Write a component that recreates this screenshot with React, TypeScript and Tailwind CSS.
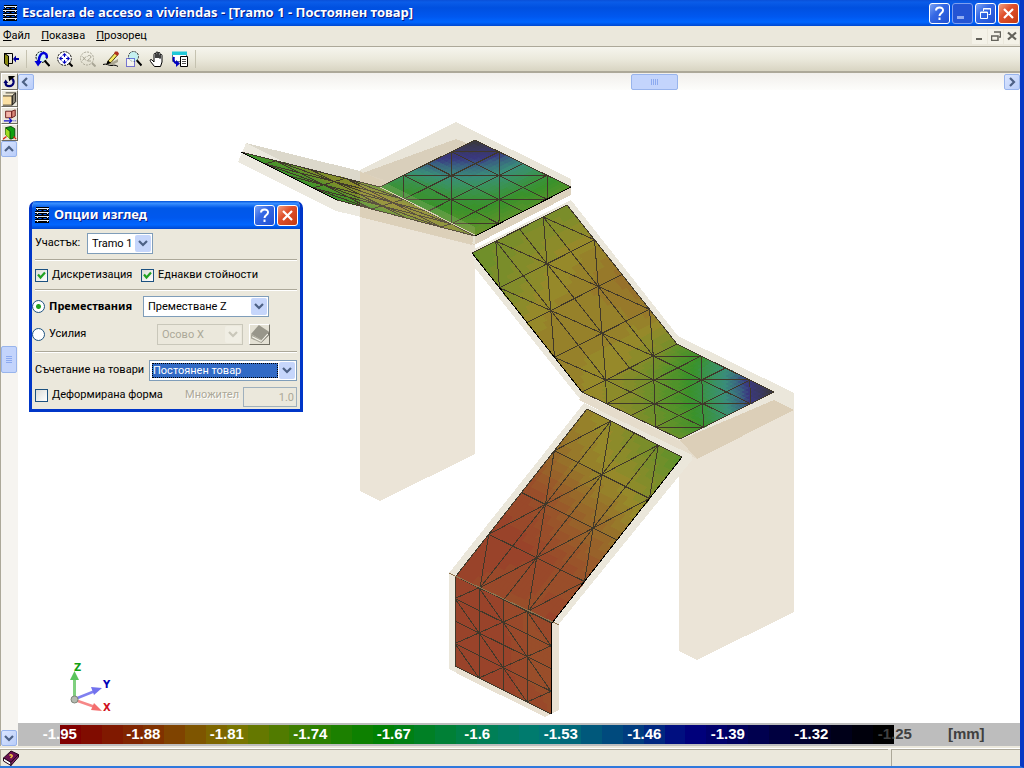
import type { ReactNode } from "react";

type Pt = [number, number];

// colour scale from -1.95 mm (t = 0) to -1.25 mm (t = 1)
const scale: [number, number, number, number][] = [
  [0, 128, 0, 0],
  [0.1, 128, 48, 0],
  [0.2, 124, 116, 0],
  [0.3, 48, 128, 0],
  [0.38, 0, 128, 0],
  [0.5, 0, 128, 80],
  [0.58, 0, 122, 118],
  [0.7, 0, 56, 128],
  [0.76, 0, 0, 128],
  [0.9, 0, 0, 48],
  [1, 0, 0, 0],
];

function scaleRgb(t: number) {
  const i = Math.max(1, scale.findIndex((s) => s[0] >= t));
  const a = scale[i - 1];
  const b = scale[i];
  const k = (t - a[0]) / (b[0] - a[0]);
  return [1, 2, 3].map((c) => a[c] + (b[c] - a[c]) * k);
}

function legendColor(t: number) {
  const [r, g, b] = scaleRgb(t).map(Math.round);
  return `rgb(${r},${g},${b})`;
}

function surfaceColor(t: number) {
  const [r, g, b] = scaleRgb(Math.round(t * 60) / 60);
  return `rgb(${Math.round(r * 0.74 + 58)},${Math.round(g * 0.7 + 56)},${Math.round(b * 0.68 + 42)})`;
}

// corners: origin, end of u, end of u+v, end of v; values are rows along v
type Surface = { corners: [Pt, Pt, Pt, Pt]; values: number[][]; edge: [number, number][] };

const surfaces: Surface[] = [
  {
    corners: [[380, 187], [475, 140], [571, 187], [475, 236]],
    values: [
      [0.38, 0.5, 0.7, 0.82, 0.96],
      [0.38, 0.43, 0.6, 0.72, 0.8],
      [0.37, 0.41, 0.48, 0.56, 0.58],
      [0.33, 0.37, 0.4, 0.42, 0.42],
      [0.27, 0.3, 0.32, 0.32, 0.32],
    ],
    edge: [[2, 3]],
  },
  {
    corners: [[241, 152], [337, 200], [475, 236], [380, 187]],
    values: [
      [0.38, 0.38, 0.38, 0.38, 0.38],
      [0.33, 0.32, 0.32, 0.33, 0.36],
      [0.25, 0.24, 0.23, 0.24, 0.28],
      [0.24, 0.21, 0.2, 0.21, 0.23],
      [0.3, 0.26, 0.23, 0.23, 0.26],
    ],
    edge: [[0, 1]],
  },
  {
    corners: [[472, 253], [567, 205], [677, 344], [582, 392]],
    values: [
      [0.28, 0.26, 0.25, 0.25, 0.26],
      [0.25, 0.23, 0.21, 0.2, 0.2],
      [0.2, 0.19, 0.185, 0.17, 0.15],
      [0.18, 0.18, 0.18, 0.18, 0.16],
      [0.19, 0.21, 0.21, 0.23, 0.27],
    ],
    edge: [[3, 0]],
  },
  {
    corners: [[582, 392], [677, 344], [774, 392], [680, 439]],
    values: [
      [0.19, 0.21, 0.22, 0.24, 0.28],
      [0.21, 0.23, 0.27, 0.33, 0.38],
      [0.23, 0.28, 0.34, 0.42, 0.56],
      [0.26, 0.32, 0.42, 0.58, 0.78],
      [0.28, 0.38, 0.54, 0.76, 0.94],
    ],
    edge: [],
  },
  {
    corners: [[587, 409], [682, 457], [552, 623], [456, 576]],
    values: [
      [0.19, 0.21, 0.24, 0.27, 0.3],
      [0.14, 0.17, 0.19, 0.2, 0.23],
      [0.05, 0.07, 0.11, 0.13, 0.15],
      [0.03, 0.03, 0.04, 0.06, 0.08],
      [0.03, 0.05, 0.06, 0.06, 0.03],
    ],
    edge: [[1, 2]],
  },
  {
    corners: [[455, 576], [551, 623], [551, 714], [455, 666]],
    values: [
      [0.03, 0.03, 0.04, 0.06, 0.05],
      [0.03, 0.03, 0.04, 0.06, 0.06],
      [0.03, 0.03, 0.03, 0.06, 0.06],
      [0.03, 0.03, 0.03, 0.06, 0.06],
      [0.03, 0.03, 0.03, 0.05, 0.06],
    ],
    edge: [[1, 2]],
  },
];

const N = 4;
const SUB = 6;

function at([o, pu, puv, pv]: Surface["corners"], u: number, v: number): Pt {
  const mix = (c: 0 | 1) =>
    o[c] * (1 - u) * (1 - v) + pu[c] * u * (1 - v) + puv[c] * u * v + pv[c] * (1 - u) * v;
  return [mix(0), mix(1)];
}

function valueAt(values: number[][], u: number, v: number) {
  const i = Math.min(N - 1, Math.floor(u * N));
  const j = Math.min(N - 1, Math.floor(v * N));
  const a = u * N - i;
  const b = v * N - j;
  return (
    values[j][i] * (1 - a) * (1 - b) +
    values[j][i + 1] * a * (1 - b) +
    values[j + 1][i + 1] * a * b +
    values[j + 1][i] * (1 - a) * b
  );
}

const pts = (list: Pt[]) => list.map((p) => p.map((n) => n.toFixed(1)).join(",")).join(" ");

function MeshSurface({ corners, values, edge }: Surface) {
  const steps = N * SUB;
  const cells: ReactNode[] = [];
  for (let j = 0; j < steps; j++) {
    for (let i = 0; i < steps; i++) {
      const u = i / steps;
      const v = j / steps;
      const d = 1 / steps;
      const fill = surfaceColor(valueAt(values, u + d / 2, v + d / 2));
      cells.push(
        <polygon
          key={`${i}-${j}`}
          points={pts([at(corners, u, v), at(corners, u + d, v), at(corners, u + d, v + d), at(corners, u, v + d)])}
          fill={fill}
          stroke={fill}
          strokeWidth="0.8"
        />
      );
    }
  }

  let d = "";
  const line = (a: Pt, b: Pt) => {
    d += `M${a[0].toFixed(1)} ${a[1].toFixed(1)}L${b[0].toFixed(1)} ${b[1].toFixed(1)}`;
  };
  for (let k = 0; k <= N; k++) {
    line(at(corners, k / N, 0), at(corners, k / N, 1));
    line(at(corners, 0, k / N), at(corners, 1, k / N));
  }
  // diagonals join the nodes whose index sum is odd
  for (let j = 0; j < N; j++) {
    for (let i = 0; i < N; i++) {
      if ((i + j) % 2) line(at(corners, i / N, j / N), at(corners, (i + 1) / N, (j + 1) / N));
      else line(at(corners, (i + 1) / N, j / N), at(corners, i / N, (j + 1) / N));
    }
  }

  return (
    <g>
      <polygon points={pts(corners)} fill={surfaceColor(values[2][2])} />
      {cells}
      <path d={d} stroke="#40382a" strokeWidth="1" fill="none" />
      {edge.map(([a, b]) => (
        <path key={a} d={`M${corners[a].join(" ")}L${corners[b].join(" ")}`} stroke="#000" strokeWidth="1" />
      ))}
    </g>
  );
}

function Model() {
  return (
    <svg
      viewBox="18 90 1002 633"
      className="absolute inset-0 h-full w-full"
      shapeRendering="crispEdges"
      role="img"
      aria-label="Tramo 1"
    >
      {/* walls */}
      <polygon points="360,170 475,225 475,454 380,501 360,491" fill="#ebe4d7" />
      <polygon points="679,440 794,393 794,612 697,660 679,651" fill="#ebe4d7" />
      {/* slabs */}
      <polygon points="360,170 456,122 571,179 571,195 474,245 360,190" fill="#e9e5d9" />
      <polygon points="360,174 456,139 490,152 380,200 360,190" fill="#d9cfbb" />
      <polygon points="380,187 571,187 571,195 474,245" fill="#ddd2be" />
      <polygon points="246,143 475,227 475,244 336,211 238,162" fill="#ece9df" />
      <polygon points="246,143 360,171 380,188 300,170" fill="#dcd8cb" />
      <polygon points="360,172 384,180 475,227 472,245 360,217" fill="#ddd2be" />
      <polygon points="472,250 571,200 678,336 794,393 794,410 697,459 579,398 475,268" fill="#ebe7db" />
      <polygon points="582,393 680,441 774,400 794,410 697,459 579,400" fill="#e5dccb" />
      <polygon points="680,440 774,400 794,410 697,459" fill="#dccfb8" />
      <polygon points="584,403 692,455 692,460 559,624 559,710 545,717 449,669 449,573" fill="#ebe7db" />
      <polygon points="552,623 559,623 559,710 545,717 456,673 456,666 552,714" fill="#e9e1d2" />
      {surfaces.map((s, i) => (
        <MeshSurface key={i} {...s} />
      ))}
      <polygon points="360,171 384,182 475,227 475,245 360,217" fill="#d8c9a8" opacity="0.18" />
      <path d="M380 187L475 235" stroke="#d8d0b4" strokeWidth="1" />
      <path d="M449 573L559 625" stroke="#8f7550" strokeWidth="1" />

      {/* axes */}
      <g shapeRendering="auto">
        <path d="M74.500 698V678" stroke="#7fd07f" strokeWidth="3" />
        <path d="M70 680L74.500 671L79 680Z" fill="#5cc45c" />
        <path d="M75 699L95 691" stroke="#8080f0" strokeWidth="2.500" />
        <path d="M91 687L102 688L94 695Z" fill="#7272ee" />
        <path d="M75 700L95 707" stroke="#f68888" strokeWidth="2.500" />
        <path d="M94 703L102 711L91 710Z" fill="#f46e6e" />
        <circle cx="74.500" cy="699.500" r="3.500" fill="#b4bab0" stroke="#7e867a" />
        <g className="font-['DejaVu_Sans'] text-[10px] font-bold">
          <text x="74" y="671" fill="#12a012">Z</text>
          <text x="103" y="688" fill="#0000b8">Y</text>
          <text x="103" y="711" fill="#d01020">X</text>
        </g>
      </g>
    </svg>
  );
}

/* ---------- icons ---------- */

function Svg({ children, className = "h-4 w-4" }: { children: ReactNode; className?: string }) {
  return (
    <svg viewBox="0 0 16 16" className={className} fill="none" aria-hidden="true">
      {children}
    </svg>
  );
}

const AppIcon = () => (
  <Svg className="h-4 w-4 shrink-0">
    <path d="M2 0H15V3H2ZM1 4H15V7H1ZM1 8H15V11H1ZM1 12H15V16H1Z" fill="#000" />
    <path d="M3.500 0V16M8.500 0V16M13.500 0V16" stroke="#000" strokeWidth="2" />
    <path d="M2 1.500H15M1 5.500H15M1 9.500H15M1 13.500H15" stroke="#e4ecf8" />
    <path d="M3.500 0V16M13.500 0V16" stroke="#e4ecf8" strokeDasharray="1 3" strokeDashoffset="-2" />
  </Svg>
);

const DoorIcon = () => (
  <Svg>
    <path d="M1 2.500H9.500V12.500H6" stroke="#000" />
    <path d="M1.500 2.500L5.500 5V15.500L1.500 12.500Z" fill="#8a8a10" stroke="#000" />
    <path d="M10 8L13 4.500V7H16V9H13V11.500Z" fill="#0000a0" />
  </Svg>
);

const ZoomPrevIcon = () => (
  <Svg>
    <circle cx="7.500" cy="6" r="5.500" stroke="#000" strokeDasharray="2 1" fill="#d4f2f4" />
    <path d="M10.500 9.500L15.500 15" stroke="#000" strokeWidth="2" />
    <path d="M12.500 7C14 2 9 0.500 6.500 4C5 6 5 8 4.500 11" stroke="#0000d8" strokeWidth="2.500" />
    <path d="M0.500 10H8L4 15.500Z" fill="#0000d8" />
  </Svg>
);

const ZoomAllIcon = () => (
  <Svg>
    <circle cx="7.500" cy="7.500" r="6.800" stroke="#000" strokeDasharray="2 1" fill="#fff" />
    <path d="M12 12L15.500 15.500" stroke="#000" strokeWidth="2" />
    <path d="M7.500 2L10 4.500H5ZM7.500 13L10 10.500H5ZM2 7.500L4.500 5V10ZM13 7.500L10.500 5V10Z" fill="#0000c0" />
    <path d="M7.500 4V6M7.500 9V11M4 7.500H6M9 7.500H11" stroke="#0000c0" />
  </Svg>
);

const ZoomTwiceIcon = () => (
  <Svg>
    <circle cx="7" cy="7.500" r="6.500" stroke="#a8a595" strokeDasharray="2 1" />
    <path d="M12 12L15.500 15.500" stroke="#a8a595" strokeWidth="2" />
    <path d="M2.500 5.500L6 9.500M6 5.500L2.500 9.500M7.500 5.500C8 4 11 4 11 6C11 7.500 8 8 7.500 10H11" stroke="#a8a595" />
  </Svg>
);

const PencilIcon = () => (
  <Svg>
    <path d="M6 13L15 8V11L9 14Z" fill="#a8a490" />
    <path d="M5 10L12.500 1.500L15 3.500L8 11.500L4.500 12.500Z" fill="#f4e860" stroke="#504010" />
    <path d="M12 0.500H14.500L16 2.500L14.500 5L11 2.500Z" fill="#b03020" />
    <path d="M0 13.500C3 12 6 15 9 14.500C11 14 13 14 15 15.500" stroke="#000" />
    <path d="M3 13.500L5 9.500L8 12Z" fill="#000" />
  </Svg>
);

const ZoomWindowIcon = () => (
  <Svg>
    <circle cx="7.500" cy="5.500" r="5" stroke="#303030" strokeDasharray="2 1" fill="#c4f0f0" />
    <path d="M11 9.500L15.500 14.500" stroke="#000" strokeWidth="2" />
    <path d="M0.500 7.500H8.500V15.500H0.500Z" stroke="#0000c0" strokeDasharray="1 1" fill="#fff" fillOpacity="0.6" />
  </Svg>
);

const HandIcon = () => (
  <Svg>
    <path
      d="M5.500 15.500L1.500 10.500C0.500 8.500 2 8 3 9L5 11V3.500C5 2 7 2 7 3.500V7V2C7 0.500 9 0.500 9 2V7V2.500C9 1 11 1 11 2.500V7.500V4.500C11 3 13 3 13 4.500V11L11.500 15.500Z"
      fill="#fff"
      stroke="#000"
    />
  </Svg>
);

const WindowCopyIcon = () => (
  <Svg>
    <path d="M0.500 1.500H14.500V10.500H0.500Z" fill="#fff" stroke="#607080" />
    <path d="M0 0.500H15V4H0Z" fill="#20c8d8" />
    <path d="M8.500 5.500H15.500V15.500H8.500Z" fill="#fff" stroke="#000" />
    <path d="M10 8.500H14M10 10.500H14M10 12.500H14" stroke="#505050" />
    <path d="M2 6C1 9 2 12 5 12.500" stroke="#0000c0" strokeWidth="2" />
    <path d="M4 9L8 12.500L4 16Z" fill="#0000c0" />
  </Svg>
);

const RotateIcon = () => (
  <Svg className="h-3.5 w-3.5">
    <path d="M3 9C3 14 11 14 12 9C12.500 6 12 5 10 4" stroke="#000070" strokeWidth="2.500" />
    <path d="M0.500 9L3 5L6 9Z" fill="#000070" />
    <path d="M6 1H14L7 7Z" fill="#000" />
  </Svg>
);

const BoxIcon = () => (
  <Svg className="h-3.5 w-3.5">
    <path d="M0 4.500H10V15H0Z" fill="#fbe0a4" />
    <path d="M0 4L4 1H14.500L10.500 4.500Z" fill="#f4ead0" />
    <path d="M10.500 4.500L14.500 1V11L10.500 15Z" fill="#8a8474" stroke="#000" />
    <path d="M0 4.500H10.500V15M0 15H10.500M3 1H14.500" stroke="#302c20" />
  </Svg>
);

const MoveBoxIcon = () => (
  <Svg className="h-3.5 w-3.5">
    <path d="M3 2.500H10V10H3Z" fill="#f4b4a8" stroke="#601010" />
    <path d="M10 2.500L14 1V8L10 10Z" fill="#d88878" stroke="#601010" />
    <path d="M1 13.500H10M7 10.500L10 13.500L7 16" stroke="#1010c8" strokeWidth="1.500" />
    <path d="M12 13.500H16" stroke="#1010c8" strokeDasharray="1 1" />
  </Svg>
);

const GreenBoxIcon = () => (
  <Svg className="h-3.5 w-3.5">
    <path d="M3 2L9 0.500L13.500 3V13L9 15L3 10Z" fill="#10a010" stroke="#064006" />
    <path d="M3 2L8 6V15L3 10Z" fill="#a0dc20" />
    <path d="M8 6L3 2M8 6V15" stroke="#064006" />
    <path d="M0 15L4 12M15 15L12 12" stroke="#e02010" strokeWidth="1.500" />
  </Svg>
);

const BookIcon = () => (
  <Svg>
    <path d="M0.500 8L8 1L15.500 4.500L8 12.500Z" fill="#6a1050" stroke="#200018" />
    <path d="M0.500 8L8 12.500V15.500L0.500 11Z" fill="#fff" stroke="#200018" />
    <path d="M8 12.500L15.500 4.500V7L8 15.500Z" fill="#8a2868" stroke="#200018" />
    <path d="M6.500 5.500C8 4 10.500 5.500 8.500 7L7.500 8" stroke="#f0c040" strokeWidth="1.500" />
  </Svg>
);

const GrayBookIcon = () => (
  <Svg className="h-[18px] w-[18px]">
    <path d="M0 8L7 0L16 6L9 13Z" fill="#98968a" />
    <path d="M0 8L9 13V16L0 12Z" fill="#a8a698" />
    <path d="M9 13L16 6V9L9 16Z" fill="#77756a" />
    <path d="M1 10.500L9 14.500L15 8" stroke="#f4f2e8" />
  </Svg>
);

const chevrons = {
  left: "M6 1L2 5L6 9",
  right: "M3 1L7 5L3 9",
  up: "M1 7L5 3L9 7",
  down: "M1 3L5 7L9 3",
};

function Chevron({ dir, color = "#4d6185" }: { dir: keyof typeof chevrons; color?: string }) {
  return (
    <svg viewBox="0 0 10 10" className="h-2.5 w-2.5" fill="none" aria-hidden="true">
      <path d={chevrons[dir]} stroke={color} strokeWidth="2.200" />
    </svg>
  );
}

/* ---------- chrome ---------- */

const captionBtn = "flex h-[21px] w-[21px] items-center justify-center rounded-[3px] border border-white";
const blueBtn = "bg-[linear-gradient(135deg,#7ba2f4_0%,#3568e4_40%,#1f50d2_100%)]";
const redBtn = "bg-[linear-gradient(135deg,#f0a080_0%,#e0512c_40%,#c33a12_100%)]";
const caption =
  "ml-1 flex-1 truncate font-['Noto_Sans',sans-serif] text-[13px] font-bold text-white [text-shadow:1px_1px_#0a1883]";

function HelpButton() {
  return (
    <button aria-label="Help" className={`${captionBtn} ${blueBtn}`}>
      <svg viewBox="0 0 15 15" className="h-[15px] w-[15px]" fill="none">
        <path d="M4 4.500C4 0.500 11.500 0.500 11 4.500C11 7 7.500 7 7.500 10M7.500 11.500V14" stroke="#fff" strokeWidth="2" />
      </svg>
    </button>
  );
}

function CloseButton() {
  return (
    <button aria-label="Close" className={`${captionBtn} ${redBtn}`}>
      <svg viewBox="0 0 15 15" className="h-[15px] w-[15px]" fill="none">
        <path d="M3 3L12 12M12 3L3 12" stroke="#fff" strokeWidth="2.200" />
      </svg>
    </button>
  );
}

function TitleBar() {
  return (
    <header className="flex h-[26px] shrink-0 items-center bg-[linear-gradient(#0a50d8_0%,#0a5ce8_8%,#0050e0_30%,#0058f0_65%,#0066ff_85%,#0048d0_100%)] pr-px pl-[2px]">
      <AppIcon />
      <h1 className={caption}>Escalera de acceso a viviendas - [Tramo 1 - Постоянен товар]</h1>
      <div className="flex gap-0.5">
        <HelpButton />
        <button
          aria-label="Minimize"
          className="flex h-[21px] w-[21px] items-end rounded-[3px] border border-[#7d9ff0] bg-[#2454d4] pb-1 pl-1"
        >
          <span className="h-[3px] w-[7px] bg-[#93acf0]" />
        </button>
        <button aria-label="Restore" className={`${captionBtn} ${blueBtn}`}>
          <svg viewBox="0 0 15 15" className="h-[15px] w-[15px]" fill="none">
            <path d="M5.500 5V2.500H12.500V8.500H10.500M5 3H13" stroke="#fff" />
            <path d="M2.500 6H9.500V12.500H2.500ZM2 6.500H10" stroke="#fff" />
          </svg>
        </button>
        <CloseButton />
      </div>
    </header>
  );
}

const menus = ["Файл", "Показва", "Прозорец"];
const mdiBtn = "flex h-[15px] w-[15px] items-center justify-center bg-[#f4f2e8]";

function MenuBar() {
  return (
    <nav className="flex h-[21px] shrink-0 items-center justify-between border-b border-[#aca899] bg-[#ebe8dc] pr-px pl-[3px]">
      <div className="flex gap-[11px] text-[11px]">
        {menus.map((m) => (
          <button key={m}>
            <span className="underline">{m[0]}</span>
            {m.slice(1)}
          </button>
        ))}
      </div>
      <div className="flex gap-px">
        <button aria-label="Minimize document" className={mdiBtn}>
          <svg viewBox="0 0 10 10" className="h-2.5 w-2.5">
            <path d="M1 7H7V9H1Z" fill="#63625a" />
          </svg>
        </button>
        <button aria-label="Restore document" className={mdiBtn}>
          <svg viewBox="0 0 10 10" className="h-2.5 w-2.5" fill="none" stroke="#63625a">
            <path d="M3 1H9.500V6H8M1 5H7V9.500H0.500V5Z" strokeWidth="1.500" />
          </svg>
        </button>
        <button aria-label="Close document" className={mdiBtn}>
          <svg viewBox="0 0 10 10" className="h-2.5 w-2.5">
            <path d="M1 1.500L9 8.500M9 1.500L1 8.500" stroke="#63625a" strokeWidth="2.200" />
          </svg>
        </button>
      </div>
    </nav>
  );
}

const tools = [
  { label: "Previous zoom", icon: <ZoomPrevIcon /> },
  { label: "Zoom all", icon: <ZoomAllIcon /> },
  { label: "Zoom x2", icon: <ZoomTwiceIcon /> },
  { label: "Redraw", icon: <PencilIcon /> },
  { label: "Zoom window", icon: <ZoomWindowIcon /> },
  { label: "Pan", icon: <HandIcon /> },
  { label: "Print view", icon: <WindowCopyIcon /> },
];

function ToolBar() {
  return (
    <div className="flex h-[26px] shrink-0 items-center border-b-2 border-[#aca899] bg-[linear-gradient(#f6f5ee,#ebe9dc_50%,#d8d4c2)] pl-[3px]">
      <button aria-label="Exit">
        <DoorIcon />
      </button>
      <div className="mr-[7px] ml-[7px] h-[18px] border-l border-[#c5c2b0]" />
      <div className="flex gap-[7px]">
        {tools.map((t) => (
          <button key={t.label} aria-label={t.label}>
            {t.icon}
          </button>
        ))}
      </div>
      <div className="ml-[7px] h-[18px] border-l border-[#c5c2b0]" />
    </div>
  );
}

const scrollBtn =
  "flex h-4 w-4 shrink-0 items-center justify-center rounded-[2px] border border-[#98b4ec] bg-[linear-gradient(135deg,#dbe6ff,#b9cdf9)]";

const sideTools = [
  { label: "Rotate", icon: <RotateIcon /> },
  { label: "Perspective", icon: <BoxIcon /> },
  { label: "Move view", icon: <MoveBoxIcon /> },
  { label: "Shaded view", icon: <GreenBoxIcon /> },
];

function SideBar() {
  return (
    <aside className="flex w-[18px] shrink-0 flex-col border-l border-[#aca899] bg-[#f6f4f0]">
      {sideTools.map((t) => (
        <button
          key={t.label}
          aria-label={t.label}
          className="flex h-[17px] w-[17px] shrink-0 items-center justify-center border border-t-white border-r-[#6c6a60] border-b-[#6c6a60] border-l-white bg-[#ebe8dc]"
        >
          {t.icon}
        </button>
      ))}
      <button aria-label="Scroll up" className={scrollBtn}>
        <Chevron dir="up" />
      </button>
      <div className="grow-[189]" />
      <div className="flex h-[27px] w-4 shrink-0 flex-col items-center justify-center gap-px rounded-[2px] border border-[#98b4ec] bg-[#c3d4fc]">
        {[0, 1, 2, 3].map((i) => (
          <span key={i} className="h-px w-1.5 bg-[#8caaf0]" />
        ))}
      </div>
      <div className="grow-[356]" />
      <button aria-label="Scroll down" className={scrollBtn}>
        <Chevron dir="down" />
      </button>
    </aside>
  );
}

function HorizontalScroll() {
  return (
    <div className="flex h-[17px] shrink-0 items-end bg-[linear-gradient(#f1efec,#fdfdfb)]">
      <button aria-label="Scroll left" className={scrollBtn}>
        <Chevron dir="left" />
      </button>
      <div className="grow-[596]" />
      <div className="flex h-4 w-[47px] shrink-0 items-center justify-center gap-px rounded-[2px] border border-[#98b4ec] bg-[#c3d4fc]">
        {[0, 1, 2, 3].map((i) => (
          <span key={i} className="h-1.5 w-px bg-[#8caaf0]" />
        ))}
      </div>
      <div className="grow-[326]" />
      <button aria-label="Scroll right" className={scrollBtn}>
        <Chevron dir="right" />
      </button>
    </div>
  );
}

const labels = ["-1.95", "-1.88", "-1.81", "-1.74", "-1.67", "-1.6", "-1.53", "-1.46", "-1.39", "-1.32"];
const BANDS = 40;

function Legend() {
  return (
    <div className="relative h-[23px] shrink-0 bg-[#bdbdbd] py-0.5">
      <div className="mr-[12.6%] ml-[4.2%] flex h-full">
        {Array.from({ length: BANDS }, (_, i) => (
          <span key={i} className="flex-1" style={{ backgroundColor: legendColor(i / (BANDS - 1)) }} />
        ))}
      </div>
      <div className="absolute inset-0 grid grid-cols-12 items-center text-center font-['Liberation_Sans',sans-serif] text-[15px] font-bold text-white">
        {labels.map((l) => (
          <span key={l}>{l}</span>
        ))}
        <span className="text-[#404040]">-1.25</span>
        <span className="pr-6 text-[#404040]">[mm]</span>
      </div>
    </div>
  );
}

/* ---------- options window ---------- */

function Select({ id, value, label, className, disabled, focused }: {
  id: string;
  value: string;
  label: string;
  className: string;
  disabled?: boolean;
  focused?: boolean;
}) {
  return (
    <div
      className={`relative flex h-[21px] items-center border p-0.5 ${disabled ? "border-[#c9c7ba] bg-[#ebe8dc]" : "border-[#7f9db9] bg-white"} ${className}`}
    >
      <select
        id={id}
        aria-label={label}
        disabled={disabled}
        className={`mr-4 h-[15px] min-w-0 flex-1 appearance-none text-[11px] outline-none ${
          disabled
            ? "pl-0.5 leading-[15px] text-[#aca899]"
            : focused
              ? "border border-dotted border-black bg-[#316ac5] leading-[13px] text-white"
              : "pl-0.5 leading-[15px] text-black"
        }`}
      >
        <option>{value}</option>
      </select>
      <span
        className={`pointer-events-none absolute top-px right-px bottom-px flex w-4 items-center justify-center rounded-[2px] ${disabled ? "bg-[#f0eee4]" : "bg-[#c6d6fb]"}`}
      >
        <Chevron dir="down" color={disabled ? "#c9c7ba" : "#4d6185"} />
      </span>
    </div>
  );
}

function CheckBox({ label, checked }: { label: string; checked?: boolean }) {
  return (
    <label className="flex items-center gap-1">
      <span className="relative flex h-[13px] w-[13px]">
        <input
          type="checkbox"
          defaultChecked={checked}
          className="peer h-[13px] w-[13px] appearance-none border border-[#1c5180] bg-[linear-gradient(135deg,#dcdcd7,#ffffff)]"
        />
        <svg viewBox="0 0 13 13" className="pointer-events-none absolute inset-0 hidden peer-checked:block" fill="none">
          <path d="M3 5.500L5.500 8.500L10 3.500" stroke="#21a121" strokeWidth="2.200" />
        </svg>
      </span>
      {label}
    </label>
  );
}

const radio =
  "h-[13px] w-[13px] appearance-none rounded-full border border-[#1c5180] bg-white checked:bg-[radial-gradient(circle,#21a121_0_2px,#ffffff_3px)]";

const Separator = () => (
  <div className="mr-[3px] ml-[3px] h-0.5 border-t border-b border-t-[#aca899] border-b-white" />
);

function OptionsWindow() {
  return (
    <section className="absolute top-[201px] left-[29px] w-[274px] overflow-hidden rounded-t-[7px] border-x-[3px] border-b-[3px] border-[#0036c8] bg-[#ebe8dc] text-[11px]">
      <div className="flex h-7 items-center bg-[linear-gradient(#0050d8_0%,#3a90ff_8%,#0058e8_25%,#0058ee_60%,#0066ff_85%,#0048d0_100%)] pr-0.5 pl-0.5">
        <AppIcon />
        <h2 className={caption}>Опции изглед</h2>
        <div className="flex gap-0.5">
          <HelpButton />
          <CloseButton />
        </div>
      </div>

      <div className="flex h-[30px] items-center justify-between pr-[147px] pb-0.5 pl-[3px]">
        <label htmlFor="section">Участък:</label>
        <Select id="section" label="Участък" value="Tramo 1" className="w-[66px]" />
      </div>
      <Separator />
      <div className="flex h-7 items-center pl-[3px]">
        <div className="w-[106px]">
          <CheckBox label="Дискретизация" checked />
        </div>
        <CheckBox label="Еднакви стойности" checked />
      </div>
      <Separator />
      <div className="flex h-[30px] items-center justify-between pr-[31px]">
        <label className="flex items-center gap-1 font-['Noto_Sans',sans-serif] font-bold">
          <input type="radio" name="result" defaultChecked className={radio} />
          Премествания
        </label>
        <Select id="displacement" label="Премествания" value="Преместване Z" className="w-[126px]" />
      </div>
      <div className="flex h-[26px] items-center pr-[30px]">
        <label className="flex flex-1 items-center gap-1">
          <input type="radio" name="result" className={radio} />
          Усилия
        </label>
        <Select id="force" label="Усилия" value="Осово X" className="mr-1.5 w-[86px]" disabled />
        <button
          aria-label="Properties"
          className="flex h-[21px] w-[21px] items-center justify-center border border-t-white border-r-[#716f64] border-b-[#716f64] border-l-white bg-[#e4e1d4]"
        >
          <GrayBookIcon />
        </button>
      </div>
      <div className="pt-1">
        <Separator />
      </div>
      <div className="flex h-[34px] items-center justify-between pr-[3px] pl-[3px]">
        <label htmlFor="loads">Съчетание на товари</label>
        <Select id="loads" label="Съчетание на товари" value="Постоянен товар" className="w-[148px]" focused />
      </div>
      <div className="flex h-[22px] items-start pr-[3px] pl-[3px]">
        <CheckBox label="Деформирана форма" />
        <label htmlFor="factor" className="mr-1 ml-auto text-[#aca899] [text-shadow:1px_1px_#ffffff]">
          Множител
        </label>
        <input
          id="factor"
          disabled
          defaultValue="1.0"
          className="h-5 w-[54px] border border-[#9fb0bd] bg-[#ebe8dc] pr-0.5 text-right text-[#aca899]"
        />
      </div>
    </section>
  );
}

export default function App() {
  return (
    <div className="relative flex h-screen flex-col overflow-hidden border-r-4 border-b-2 border-r-[#0838c4] border-b-[#2f78dc] bg-[#ebe8dc] font-['Roboto',sans-serif] text-black">
      <TitleBar />
      <MenuBar />
      <ToolBar />
      <main className="flex min-h-0 flex-1">
        <SideBar />
        <div className="flex min-w-0 flex-1 flex-col bg-white">
          <HorizontalScroll />
          <div className="relative min-h-0 flex-1">
            <Model />
          </div>
          <Legend />
        </div>
      </main>
      <footer className="mt-0.5 flex h-[18px] shrink-0 gap-[3px] border-t border-white">
        <div className="flex flex-1 items-center border-t border-l border-[#aca899] pl-0.5">
          <BookIcon />
        </div>
        <div className="w-[129px] border-t border-l border-[#aca899]" />
      </footer>
      <OptionsWindow />
    </div>
  );
}
